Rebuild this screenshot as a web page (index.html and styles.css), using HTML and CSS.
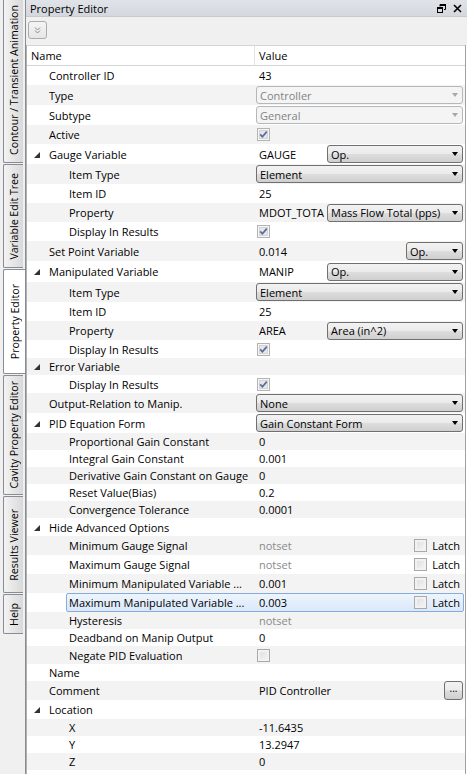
FILE: index.html
```html
<!DOCTYPE html>
<html>
    <head>
        <title>Property Editor</title>
        <link rel="stylesheet" href="styles.css">
    </head>
    <body>
        <div class="app">
            <!-- docked tabs on the left -->
            <div class="side">
                <div class="tab t-contour"><span>Contour / Transient Animation</span></div>
                <div class="tab t-vet"><span>Variable Edit Tree</span></div>
                <div class="tab t-prop active"><span>Property Editor</span></div>
                <div class="tab t-cav"><span>Cavity Property Editor</span></div>
                <div class="tab t-res"><span>Results Viewer</span></div>
                <div class="tab t-help"><span>Help</span></div>
            </div>

            <div class="panel">
                <div class="titlebar">
                    <span>Property Editor</span>
                    <span class="winbtns">
                        <svg width="9" height="9" viewBox="0 0 9 9"><path d="M3 0.5h5.5v5h-1.5M3 0.5v2" fill="none" stroke="#000" stroke-width="1"/><rect x="3" y="0" width="6" height="2" fill="#000"/><rect x="0.5" y="3.5" width="5" height="5" fill="none" stroke="#000"/><rect x="0" y="3" width="6" height="2" fill="#000"/></svg>
                        <svg width="9" height="9" viewBox="0 0 9 9"><path d="M1 1L8 8M8 1L1 8" stroke="#000" stroke-width="1.6"/></svg>
                    </span>
                </div>
                <div class="toolbar">
                    <div class="tbtn">
                        <svg width="7" height="7" viewBox="0 0 7 7"><path d="M1 0.5L3.5 3L6 0.5M1 3.5L3.5 6L6 3.5" fill="none" stroke="#8a8a8a" stroke-width="1"/></svg>
                    </div>
                </div>

                <div class="grid">
                    <div class="hdr"><div class="c1">Name</div><div class="c2">Value</div></div>

                    <div class="row h19"><div class="c1 l0">Controller ID</div><div class="c2">43</div></div>
                    <div class="row h20"><div class="c1 l0">Type</div><div class="c2"><div class="combo off"><span>Controller</span><i class="arr"></i></div></div></div>
                    <div class="row h20"><div class="c1 l0">Subtype</div><div class="c2"><div class="combo off"><span>General</span><i class="arr"></i></div></div></div>
                    <div class="row h19"><div class="c1 l0">Active</div><div class="c2">
                        <svg class="chk" width="13" height="13" viewBox="0 0 13 13"><rect x="0.5" y="0.5" width="12" height="12" fill="#f6f6f6" stroke="#b4b4b4"/><rect x="2.5" y="2.5" width="8" height="8" fill="#e6e6e6" stroke="#d4d4d4"/><path d="M3.2 6.4L5.4 8.8L9.8 3.6" fill="none" stroke="#566c9c" stroke-width="1.7"/></svg>
                    </div></div>
                    <div class="row h20"><div class="c1 l0"><i class="exp"></i>Gauge Variable</div><div class="c2"><span class="pre">GAUGE</span><div class="combo"><span>Op.</span><i class="arr"></i></div></div></div>
                    <div class="row h20"><div class="c1 l1">Item Type</div><div class="c2"><div class="combo"><span>Element</span><i class="arr"></i></div></div></div>
                    <div class="row h19"><div class="c1 l1">Item ID</div><div class="c2">25</div></div>
                    <div class="row h19"><div class="c1 l1">Property</div><div class="c2"><span class="pre">MDOT_TOTA</span><div class="combo"><span>Mass Flow Total (pps)</span><i class="arr"></i></div></div></div>
                    <div class="row h19"><div class="c1 l1">Display In Results</div><div class="c2">
                        <svg class="chk" width="13" height="13" viewBox="0 0 13 13"><rect x="0.5" y="0.5" width="12" height="12" fill="#f6f6f6" stroke="#b4b4b4"/><rect x="2.5" y="2.5" width="8" height="8" fill="#e6e6e6" stroke="#d4d4d4"/><path d="M3.2 6.4L5.4 8.8L9.8 3.6" fill="none" stroke="#566c9c" stroke-width="1.7"/></svg>
                    </div></div>
                    <div class="row h20"><div class="c1 l0">Set Point Variable</div><div class="c2"><span class="grow">0.014</span><div class="combo small"><span>Op.</span><i class="arr"></i></div></div></div>
                    <div class="row h21"><div class="c1 l0"><i class="exp"></i>Manipulated Variable</div><div class="c2"><span class="pre">MANIP</span><div class="combo"><span>Op.</span><i class="arr"></i></div></div></div>
                    <div class="row h20"><div class="c1 l1">Item Type</div><div class="c2"><div class="combo"><span>Element</span><i class="arr"></i></div></div></div>
                    <div class="row h19"><div class="c1 l1">Item ID</div><div class="c2">25</div></div>
                    <div class="row h19"><div class="c1 l1">Property</div><div class="c2"><span class="pre">AREA</span><div class="combo"><span>Area (in^2)</span><i class="arr"></i></div></div></div>
                    <div class="row h18"><div class="c1 l1">Display In Results</div><div class="c2">
                        <svg class="chk" width="13" height="13" viewBox="0 0 13 13"><rect x="0.5" y="0.5" width="12" height="12" fill="#f6f6f6" stroke="#b4b4b4"/><rect x="2.5" y="2.5" width="8" height="8" fill="#e6e6e6" stroke="#d4d4d4"/><path d="M3.2 6.4L5.4 8.8L9.8 3.6" fill="none" stroke="#566c9c" stroke-width="1.7"/></svg>
                    </div></div>
                    <div class="row h17"><div class="c1 l0"><i class="exp"></i>Error Variable</div><div class="c2"></div></div>
                    <div class="row h18"><div class="c1 l1">Display In Results</div><div class="c2">
                        <svg class="chk" width="13" height="13" viewBox="0 0 13 13"><rect x="0.5" y="0.5" width="12" height="12" fill="#f6f6f6" stroke="#b4b4b4"/><rect x="2.5" y="2.5" width="8" height="8" fill="#e6e6e6" stroke="#d4d4d4"/><path d="M3.2 6.4L5.4 8.8L9.8 3.6" fill="none" stroke="#566c9c" stroke-width="1.7"/></svg>
                    </div></div>
                    <div class="row h20"><div class="c1 l0">Output-Relation to Manip.</div><div class="c2"><div class="combo"><span>None</span><i class="arr"></i></div></div></div>
                    <div class="row h20"><div class="c1 l0"><i class="exp"></i>PID Equation Form</div><div class="c2"><div class="combo"><span>Gain Constant Form</span><i class="arr"></i></div></div></div>
                    <div class="row h17"><div class="c1 l1">Proportional Gain Constant</div><div class="c2">0</div></div>
                    <div class="row h17"><div class="c1 l1">Integral Gain Constant</div><div class="c2">0.001</div></div>
                    <div class="row h17"><div class="c1 l1">Derivative Gain Constant on Gauge</div><div class="c2">0</div></div>
                    <div class="row h17"><div class="c1 l1">Reset Value(Bias)</div><div class="c2">0.2</div></div>
                    <div class="row h17"><div class="c1 l1">Convergence Tolerance</div><div class="c2">0.0001</div></div>
                    <div class="row h18"><div class="c1 l0"><i class="exp"></i>Hide Advanced Options</div><div class="c2"></div></div>
                    <div class="row h19"><div class="c1 l1">Minimum Gauge Signal</div><div class="c2"><span class="grow dim">notset</span><span class="latch"><i class="box"></i>Latch</span></div></div>
                    <div class="row h19"><div class="c1 l1">Maximum Gauge Signal</div><div class="c2"><span class="grow dim">notset</span><span class="latch"><i class="box"></i>Latch</span></div></div>
                    <div class="row h19"><div class="c1 l1">Minimum Manipulated Variable ...</div><div class="c2"><span class="grow">0.001</span><span class="latch"><i class="box"></i>Latch</span></div></div>
                    <div class="row h19 sel">
                        <div class="selbox">
                            <div class="c1">Maximum Manipulated Variable ...</div><div class="c2"><span class="grow">0.003</span><span class="latch"><i class="box"></i>Latch</span></div>
                        </div>
                    </div>
                    <div class="row h17"><div class="c1 l1">Hysteresis</div><div class="c2 dim">notset</div></div>
                    <div class="row h17"><div class="c1 l1">Deadband on Manip Output</div><div class="c2">0</div></div>
                    <div class="row h18"><div class="c1 l1">Negate PID Evaluation</div><div class="c2"><i class="box"></i></div></div>
                    <div class="row h17"><div class="c1 l0">Name</div><div class="c2"></div></div>
                    <div class="row h19"><div class="c1 l0">Comment</div><div class="c2"><span class="grow">PID Controller</span><span class="dots">...</span></div></div>
                    <div class="row h19"><div class="c1 l0"><i class="exp"></i>Location</div><div class="c2"></div></div>
                    <div class="row h17"><div class="c1 l1">X</div><div class="c2">-11.6435</div></div>
                    <div class="row h17"><div class="c1 l1">Y</div><div class="c2">13.2947</div></div>
                    <div class="row h17"><div class="c1 l1">Z</div><div class="c2">0</div></div>
                </div>
            </div>
        </div>
    </body>
</html>
```

FILE: styles.css
```css
body
{
    margin:0;
    font-family:"Segoe UI","Open Sans",sans-serif;
    font-size:11px;
    color:#000;
    background-color:#f0f0f0;
}
.app
{
    display:flex;
    width:467px;
    height:774px;
    overflow:hidden;
}

/* left dock tabs */
.side
{
    flex:0 0 25px;
    box-sizing:border-box;
    border-right:1px solid #898c95;
    padding-left:3px;
    display:flex;
    flex-direction:column;
    align-items:flex-start;
}
.tab
{
    box-sizing:border-box;
    width:20px;
    border:1px solid #898c95;
    border-right:none;
    border-radius:2px 0 0 2px;
    background:linear-gradient(to right,#f3f3f3,#e6e6e6 50%,#d9d9d9);
    display:flex;
    align-items:center;
    justify-content:center;
    margin-bottom:1px;
}
.tab span
{
    writing-mode:vertical-rl;
    transform:rotate(180deg);
    white-space:nowrap;
    font-size:10.6px;
}
.tab.active
{
    width:22px;
    background:#fff;
}
.t-contour { height:165px; margin-top:-2px; }
.t-vet { height:104px; }
.t-prop { height:105px; }
.t-cav { height:120px; }
.t-res { height:97px; }
.t-help { height:40px; }

/* main panel */
.panel
{
    flex:1;
    display:flex;
    flex-direction:column;
    background-color:#fff;
}
.titlebar
{
    height:17px;
    box-sizing:border-box;
    background:linear-gradient(#e0e3e8,#d4d8de);
    border-bottom:1px solid #c6cad0;
    display:flex;
    align-items:center;
    justify-content:space-between;
    padding:0 5px 0 4px;
}
.winbtns
{
    display:flex;
    gap:7px;
}
.toolbar
{
    height:28px;
    box-sizing:border-box;
    background-color:#f0f0f0;
    padding:4px 0 0 2px;
}
.tbtn
{
    width:19px;
    height:18px;
    box-sizing:border-box;
    border:1px solid #acacac;
    border-radius:3px;
    background:linear-gradient(#f4f4f4,#e6e6e6);
    display:flex;
    align-items:center;
    justify-content:center;
}

/* property grid */
.grid
{
    flex:1;
    border-right:1px solid #a0a0a0;
    margin-right:1px;
    border-left:1px solid #b0b0b0;
}
.hdr
{
    display:flex;
    height:21px;
    box-sizing:border-box;
    border-top:1px solid #d5d5d5;
    border-bottom:1px solid #d5d5d5;
    align-items:center;
}
.hdr .c1
{
    width:228px;
    box-sizing:border-box;
    padding-left:4px;
    border-right:1px solid #e3e3e3;
    height:19px;
    line-height:19px;
}
.hdr .c2
{
    padding-left:4px;
}
.row
{
    display:flex;
    align-items:center;
    white-space:nowrap;
}
.row:nth-child(odd)
{
    background-color:#f3f3f3;
}
.h17 { height:17px; }
.h18 { height:18px; }
.h19 { height:19px; }
.h20 { height:20px; }
.h21 { height:21px; }
.c1
{
    width:228px;
    flex:0 0 228px;
    box-sizing:border-box;
    position:relative;
    overflow:hidden;
}
.l0 { padding-left:22px; }
.l1 { padding-left:42px; }
.c2
{
    flex:1;
    display:flex;
    align-items:center;
    padding-left:4px;
    padding-right:2px;
    min-width:0;
}
.dim
{
    color:#8a8a8a;
}
.exp
{
    position:absolute;
    left:7px;
    top:5px;
    width:0;
    height:0;
    border-left:6px solid transparent;
    border-bottom:6px solid #333;
}
.pre
{
    flex:0 0 68px;
    width:68px;
}
.grow
{
    flex:1;
}

/* combo boxes */
.combo
{
    flex:1;
    height:18px;
    box-sizing:border-box;
    margin-left:-3px;
    border:1px solid #707070;
    border-radius:3px;
    background:linear-gradient(#f2f2f2,#ebebeb 48%,#dddddd 52%,#cfcfcf);
    display:flex;
    align-items:center;
    justify-content:space-between;
    padding:0 4px 0 3px;
}
.pre + .combo
{
    margin-left:0;
}
.combo.small
{
    flex:0 0 57px;
}
.combo.off
{
    border-color:#b5b8bb;
    background:#f4f4f4;
    color:#838383;
}
.arr
{
    width:0;
    height:0;
    border-left:3.5px solid transparent;
    border-right:3.5px solid transparent;
    border-top:4px solid #000;
}
.combo.off .arr
{
    border-top-color:#a8a8a8;
}
.chk
{
    margin-left:-2px;
}
.box
{
    width:13px;
    height:13px;
    box-sizing:border-box;
    border:1px solid #a9a9a9;
    background:linear-gradient(135deg,#dcdcdc,#f7f7f7);
    box-shadow:inset 0 0 0 2px #f2f2f2;
    margin-left:-2px;
}
.latch
{
    display:flex;
    align-items:center;
    gap:5px;
    margin-right:3px;
}
.dots
{
    width:19px;
    height:19px;
    box-sizing:border-box;
    border:1px solid #707070;
    border-radius:3px;
    background:linear-gradient(#f2f2f2,#ebebeb 48%,#dddddd 52%,#cfcfcf);
    text-align:center;
    line-height:12px;
    font-size:10px;
}

/* selected row */
.sel .selbox
{
    margin-left:39px;
    flex:1;
    height:19px;
    box-sizing:border-box;
    border:1px solid #84acdd;
    border-radius:2px;
    background:linear-gradient(#eef5fd,#d9e8fb);
    display:flex;
    align-items:center;
    margin-right:1px;
}
.sel .c1
{
    width:188px;
    flex:0 0 188px;
    padding-left:2px;
}
.sel .latch
{
    margin-right:1px;
}
```
